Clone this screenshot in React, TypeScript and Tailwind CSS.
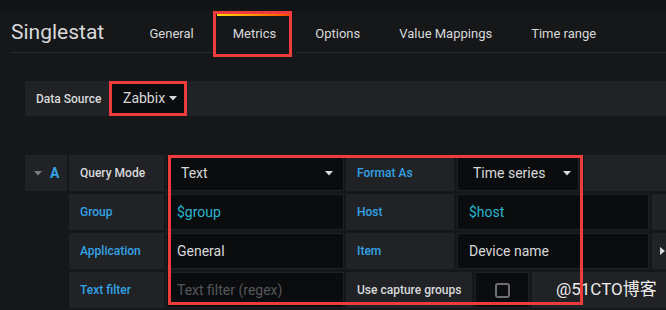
import React from 'react';

const labelBg = 'bg-[#202226]';

function Caret({ className = '' }: { className?: string }) {
  return (
    <svg width="8" height="5" viewBox="0 0 8 5" className={className}>
      <path d="M0 0 L8 0 L4 4.5 Z" fill="currentColor" />
    </svg>
  );
}

function Label({ w, blue, children }: { w: string; blue?: boolean; children: React.ReactNode }) {
  return (
    <div
      className={`${w} ${labelBg} h-full flex items-center px-[11px] text-[12px] font-medium whitespace-nowrap ${
        blue ? 'text-[#33a2e5]' : 'text-[#d8d9da]'
      }`}
    >
      {children}
    </div>
  );
}

function Field({ w, className = '', children }: { w: string; className?: string; children?: React.ReactNode }) {
  return (
    <div
      className={`${w} ${className} h-full flex items-center bg-[#0b0c0e] border border-[#1f2023] text-[14px] whitespace-nowrap`}
    >
      {children}
    </div>
  );
}

const tabs = ['General', 'Metrics', 'Options', 'Value Mappings', 'Time range'];

export default function App() {
  return (
    <div
      className="relative w-[666px] h-[310px] overflow-hidden bg-[#161719] text-[#d8d9da]"
      style={{ fontFamily: 'Roboto, "Noto Sans CJK SC", sans-serif' }}
    >
      <div className="h-[12px] bg-[#131416]" />

      {/* header with tabs */}
      <div className="ml-[11px] h-[41px] flex items-stretch border-b border-[#2c2d30]">
        <div className="w-[119px] flex items-center text-[21px] text-[#d8d9da] pt-[2px]">Singlestat</div>
        {tabs.map((t) => {
          const active = t === 'Metrics';
          return (
            <div
              key={t}
              className={`relative flex items-center px-[19.5px] pt-[3px] text-[13px] text-[#d8d9da] ${
                active ? 'bg-[#161719] -mb-[1px]' : ''
              }`}
            >
              {active && (
                <>
                  <div className="absolute left-[4px] right-[6px] top-[2px] h-[2px] bg-gradient-to-r from-[#ffd500] to-[#ff4400]" />
                  <div className="absolute left-0 right-[4px] -top-[1px] -bottom-[4px] border-[3px] border-[#ee3b3b]" />
                </>
              )}
              {t}
            </div>
          );
        })}
      </div>

      <div className="pl-[25px]">
        {/* data source */}
        <div className={`mt-[28px] h-[35px] flex items-stretch ${labelBg}`}>
          <div className="w-[84px] flex items-center pl-[11px] text-[12px] font-medium text-[#d8d9da] whitespace-nowrap">
            Data Source
          </div>
          <div className="w-[78px] flex items-center justify-between pl-[11px] pr-[7px] bg-[#0b0c0e] border-[3px] border-[#ee3b3b] text-[14px] text-[#d8d9da]">
            Zabbix
            <Caret className="text-[#d8d9da]" />
          </div>
        </div>

        {/* query rows */}
        <div className="mt-[39px] flex flex-col gap-[3px]">
          <div className="flex h-[36px] gap-[2px]">
            <div className={`w-[42px] ${labelBg} flex items-center pl-[9px] gap-[8px]`}>
              <Caret className="text-[#7b7c7f]" />
              <span className="text-[14px] font-bold text-[#33a2e5]">A</span>
            </div>
            <Label w="w-[95px]">Query Mode</Label>
            <Field w="w-[178px]" className="justify-between pl-[14px] pr-[10px]">
              Text
              <Caret className="text-[#d8d9da]" />
            </Field>
            <Label w="w-[108px]" blue>Format As</Label>
            <Field w="w-[122px]" className="ml-[1px] justify-between pl-[15px] pr-[7px]">
              Time series
              <Caret className="text-[#d8d9da]" />
            </Field>
            <div className={`flex-1 ml-[3px] ${labelBg}`} />
          </div>

          <div className="flex h-[36px] gap-[2px]">
            <div className="w-[42px]" />
            <Label w="w-[95px]" blue>Group</Label>
            <Field w="w-[178px]" className="pl-[10px] text-[#28b6cf]">$group</Field>
            <Label w="w-[108px]" blue>Host</Label>
            <Field w="w-[192px]" className="ml-[1px] pl-[11px] text-[#28b6cf]">$host</Field>
            <div className={`flex-1 ml-[1px] ${labelBg}`} />
          </div>

          <div className="flex h-[36px] gap-[2px]">
            <div className="w-[42px]" />
            <Label w="w-[95px]" blue>Application</Label>
            <Field w="w-[178px]" className="pl-[10px] text-[#d8d9da]">General</Field>
            <Label w="w-[108px]" blue>Item</Label>
            <Field w="w-[192px]" className="ml-[1px] pl-[11px] text-[#d8d9da]">Device name</Field>
            <div className={`flex-1 ml-[1px] ${labelBg} flex items-center pl-[8px]`}>
              <svg width="5" height="8" viewBox="0 0 5 8">
                <path d="M0 0 L5 4 L0 8 Z" fill="#d8d9da" />
              </svg>
            </div>
          </div>

          <div className="flex h-[36px] gap-[2px]">
            <div className="w-[42px]" />
            <Label w="w-[95px]" blue>Text filter</Label>
            <Field w="w-[178px]" className="pl-[10px] text-[#55575c]">Text filter (regex)</Field>
            <Label w="w-[126px]">Use capture groups</Label>
            <Field w="w-[54px]" className="ml-[1px] justify-center">
              <div className="w-[15px] h-[15px] rounded-[3px] border-2 border-[#6e6f73]" />
            </Field>
            <div className={`flex-1 ml-[1px] ${labelBg} flex items-center pl-[24px] text-[17px] text-[#ececec]`}>
              @51CTO博客
            </div>
          </div>
        </div>
      </div>

      {/* annotation box */}
      <div className="absolute left-[168px] top-[155px] w-[415px] h-[150px] border-[3px] border-[#ee3b3b] pointer-events-none" />
    </div>
  );
}
